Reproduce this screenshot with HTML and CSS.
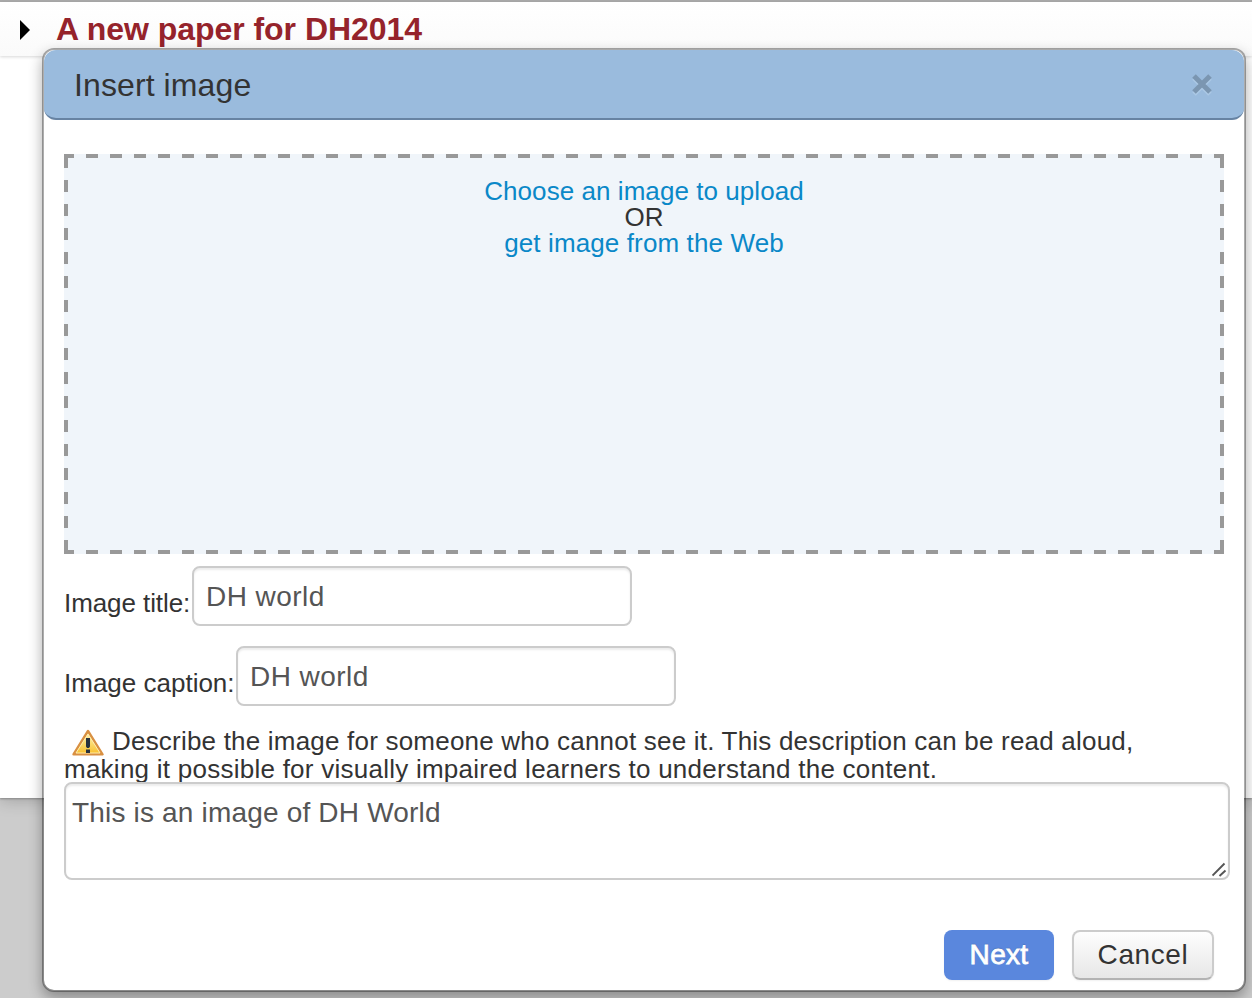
FILE: index.html
```html
<!DOCTYPE html>
<html lang="en">
<head>
<meta charset="utf-8">
<title>Insert image</title>
<link rel="stylesheet" href="styles.css">
</head>
<body>
<div class="page">
  <header class="topbar">
    <svg class="caret" width="10" height="20" viewBox="0 0 10 20"><path d="M0 0L10 10L0 20Z"/></svg>
    <h1 class="doc-title">A new paper for DH2014</h1>
  </header>
</div>
<section class="modal">
  <header class="modal-header">
    <h2 class="modal-title">Insert image</h2>
    <svg class="close" width="20" height="22" viewBox="0 0 20 22" fill="none" stroke-width="5"><path class="close-glow" d="M2 4L18 20M18 4L2 20"/><path class="close-mark" d="M2 2L18 18M18 2L2 18"/></svg>
  </header>
  <div class="modal-body">
    <div class="dropzone">
      <a class="link choose">Choose an image to upload</a>
      <span class="or">OR</span>
      <a class="link web">get image from the Web</a>
    </div>
    <div class="field"><label class="label-title">Image title:</label><div class="input">DH world</div></div>
    <div class="field"><label class="label-caption">Image caption:</label><div class="input">DH world</div></div>
    <div class="hint">
      <div class="hint-line first">
        <svg class="warn" width="32" height="28" viewBox="0 0 32 28">
          <defs><linearGradient id="warnFill" x1="0" y1="0" x2="0" y2="1"><stop offset="0" stop-color="#fff3b8"/><stop offset=".5" stop-color="#fbdc74"/><stop offset="1" stop-color="#f9bd27"/></linearGradient></defs>
          <path d="M16 2L30.5 25.3H1.5Z" fill="url(#warnFill)" stroke="#d99042" stroke-width="2.4" stroke-linejoin="round"/>
          <path d="M16 5L28 24H4Z" fill="none" stroke="#ffeeb0" stroke-width="1"/>
          <path d="M14 9H18V17.5L17 19H15L14 17.5ZM14 20.5H18V24H14Z" fill="#27323f"/>
        </svg>
        <span class="hint-a">Describe the image for someone who cannot see it. This description can be read aloud,</span>
      </div>
      <div class="hint-line hint-b">making it possible for visually impaired learners to understand the content.</div>
    </div>
    <div class="textarea">
      <span class="textarea-text">This is an image of DH World</span>
      <svg class="grip" width="16" height="16" viewBox="0 0 16 16" fill="none" stroke="#555" stroke-width="1.9"><path d="M.5 13.5L12.5 1.5M7.5 14L13.5 8.5"/></svg>
    </div>
  </div>
  <footer class="modal-footer">
    <div class="btn primary">Next</div>
    <div class="btn">Cancel</div>
  </footer>
</section>
</body>
</html>
```
FILE: styles.css
```css
* { box-sizing: border-box; }
body {
  margin: 0;
  width: 1252px;
  height: 998px;
  overflow: hidden;
  position: relative;
  background: #ccc;
  color: #333;
  font: 26px/26px "Liberation Sans", Arial, sans-serif;
}
h1, h2 { margin: 0; }
span, a, label, h1, h2, .hint-line, .btn, .input { white-space: nowrap; }
.page {
  height: 798px;
  background: #fff;
  border-top: 2px solid #aaa;
  box-shadow: 0 1px 2px #888, 0 2px 16px rgba(0,0,0,.22);
}
.topbar {
  height: 54px;
  display: flex;
  align-items: center;
  padding: 0 0 0 20px;
  background: linear-gradient(#fff, #fafafa);
  box-shadow: 0 1px 3px rgba(0,0,0,.16);
}
.caret { margin-top: 2px; }
.doc-title {
  margin-left: 26px;
  color: #95232b;
  font-size: 32px;
  line-height: 54px;
  letter-spacing: -.04px;
}
.modal {
  position: absolute;
  left: 42px;
  top: 48px;
  width: 1204px;
  height: 944px;
  border: 2px solid rgba(0,0,0,.32);
  border-radius: 12px;
  background: #fff;
  background-clip: padding-box;
  box-shadow: 0 6px 14px rgba(0,0,0,.32);
  display: flex;
  flex-direction: column;
}
.modal-header {
  height: 70px;
  flex: none;
  display: flex;
  justify-content: space-between;
  padding: 0 32px 0 30px;
  background: #9abbdd;
  border-bottom: 2px solid #6783a3;
  border-radius: 12px;
}
.modal-title {
  font-size: 32px;
  font-weight: 400;
  line-height: 70px;
  letter-spacing: .1px;
}
.close { margin-top: 24px; }
.close-mark { stroke: #7b96b1; }
.close-glow { stroke: #abc8e5; }
.modal-body { padding: 34px 14px 0 20px; }
.dropzone {
  width: 1160px;
  height: 400px;
  padding-top: 24px;
  display: flex;
  flex-direction: column;
  align-items: center;
  background:
    repeating-linear-gradient(90deg, #999 0 10px, transparent 10px 22px, #999 22px 24px) 0 0 / 100% 4px no-repeat,
    repeating-linear-gradient(90deg, #999 0 10px, transparent 10px 22px, #999 22px 24px) 0 100% / 100% 4px no-repeat,
    linear-gradient(#999, #999) 0 0 / 4px 14px no-repeat,
    repeating-linear-gradient(#999 0 12px, transparent 12px 24px) 0 26px / 4px 374px no-repeat,
    linear-gradient(#999, #999) 100% 0 / 4px 14px no-repeat,
    repeating-linear-gradient(#999 0 12px, transparent 12px 24px) 100% 26px / 4px 374px no-repeat,
    #f0f5fa;
}
.link { color: #0a88c8; }
.choose { letter-spacing: .06px; }
.web { letter-spacing: .12px; }
.field {
  display: flex;
  height: 60px;
  margin-top: 12px;
}
.field + .field { margin-top: 20px; }
.field label { line-height: 74px; margin-right: 2px; }
.label-title { width: 126px; letter-spacing: -.08px; }
.label-caption { width: 170px; }
.input {
  width: 440px;
  height: 60px;
  padding-left: 12px;
  border: 2px solid #ccc;
  border-radius: 8px;
  box-shadow: inset 0 2px 2px rgba(0,0,0,.075);
  color: #555;
  font-size: 28px;
  line-height: 57px;
  letter-spacing: .45px;
}
.hint {
  height: 56px;
  margin-top: 20px;
  line-height: 30px;
}
.hint-line { display: flex; height: 28px; }
.hint-a { letter-spacing: .205px; }
.hint-b { letter-spacing: .25px; }
.first { padding-left: 8px; }
.warn { margin: 3px 8px 0 0; flex: none; }
.textarea {
  position: relative;
  width: 1166px;
  height: 98px;
  padding: 12px 6px;
  background: #fff;
  border: 2px solid #ccc;
  border-radius: 8px;
  box-shadow: inset 0 2px 2px rgba(0,0,0,.075);
  color: #555;
  font-size: 28px;
  line-height: 34px;
  letter-spacing: .18px;
}
.grip { position: absolute; right: 0; bottom: 0; }
.modal-footer {
  display: flex;
  justify-content: flex-end;
  gap: 18px;
  padding: 50px 30px 0 0;
}
.btn {
  width: 142px;
  height: 50px;
  border: 2px solid #ccc;
  border-bottom-color: #b3b3b3;
  border-radius: 8px;
  background: linear-gradient(#fff, #e6e6e6) border-box;
  box-shadow: 0 1px 2px rgba(0,0,0,.06);
  font-size: 28px;
  line-height: 46px;
  letter-spacing: .6px;
  text-align: center;
}
.primary {
  width: 110px;
  border: 0;
  background: #5a87dd;
  color: #fff;
  line-height: 50px;
  letter-spacing: .3px;
  -webkit-text-stroke: .8px #fff;
  text-shadow: 0 -1px 1px rgba(0,0,0,.25);
}
```
